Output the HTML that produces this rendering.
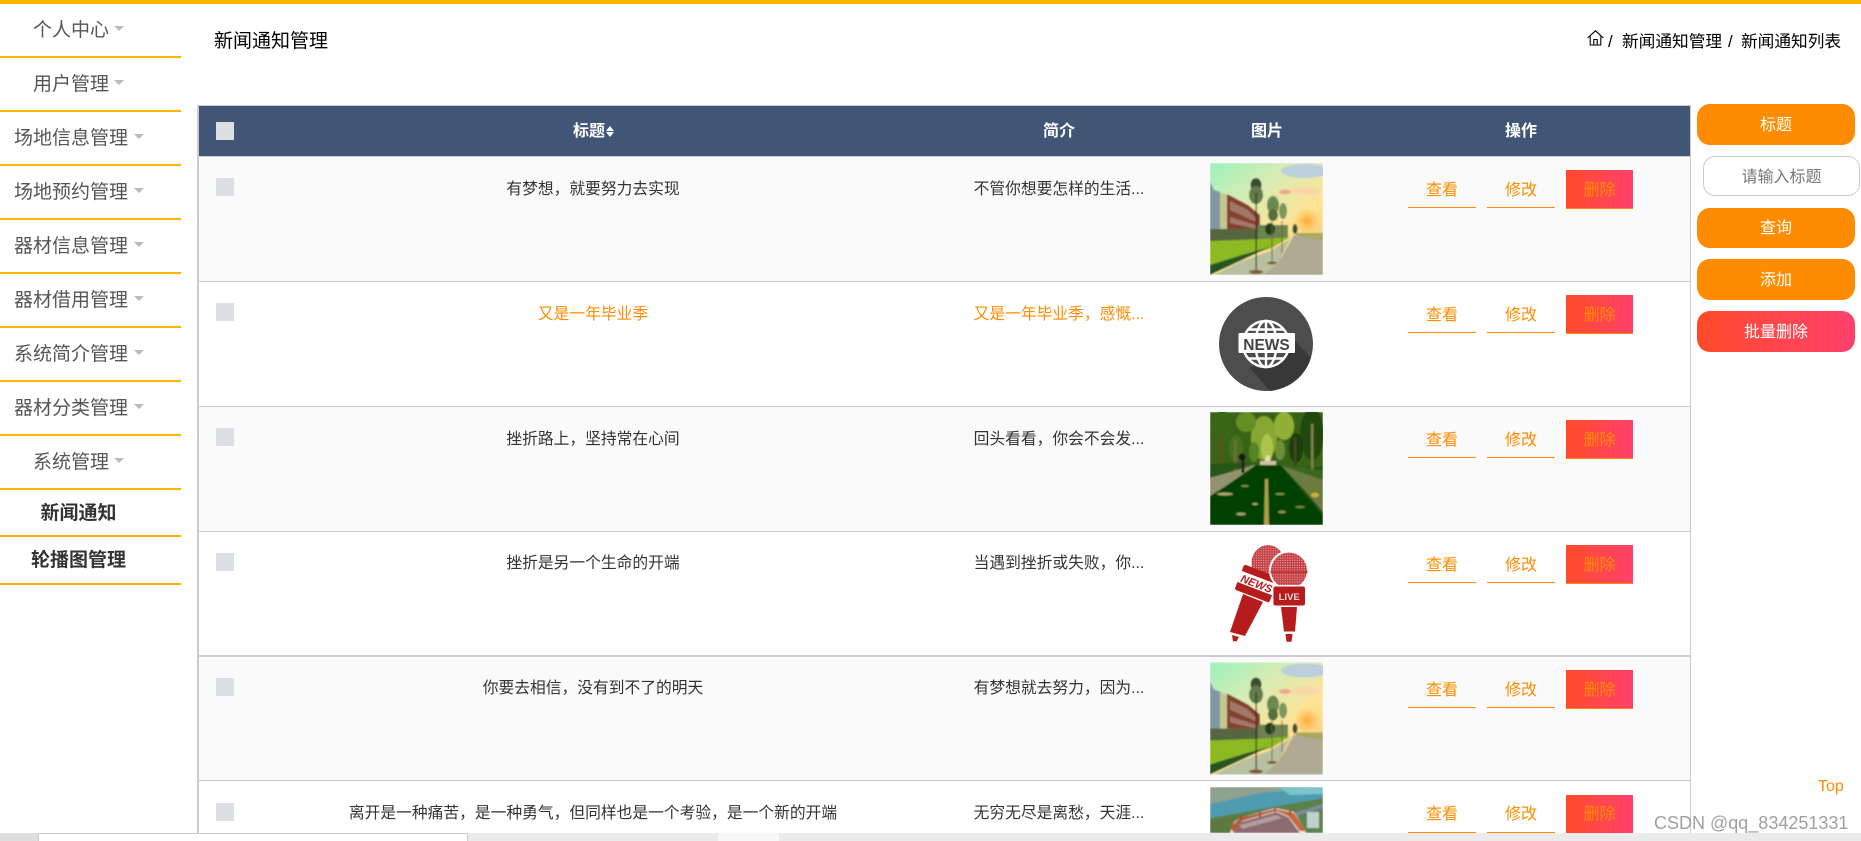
<!DOCTYPE html>
<html lang="zh-CN">
<head>
<meta charset="utf-8">
<title>新闻通知管理</title>
<style>
html,body{margin:0;padding:0;width:1861px;height:841px;overflow:hidden;background:#fff;}
body{position:relative;font-family:"Liberation Sans","Noto Sans CJK SC",sans-serif;font-size:16px;color:#333;}
.a{position:absolute;white-space:nowrap;}
.c{text-align:center;}
#top{left:0;top:0;width:1861px;height:4px;background:#ffb400;}
.m{left:0;width:181px;height:2px;background:#ffb400;}
.mt{font-size:19px;line-height:28px;height:28px;color:#555;}
.mb{font-size:19px;line-height:28px;height:28px;color:#333;font-weight:700;left:0;width:157px;text-align:center;}
.tri{width:0;height:0;border-left:5.5px solid transparent;border-right:5.5px solid transparent;border-top:5px solid #bbb;}
.row{left:199px;width:1491px;height:125px;}
.ln{left:199px;width:1491px;height:1px;background:#ccc;}
.cb{left:216px;width:18px;height:18px;background:#dcdfe4;}
.t{left:243px;width:700px;text-align:center;line-height:24px;height:24px;color:#333;font-size:15.75px;}
.i{left:909px;width:300px;text-align:center;line-height:24px;height:24px;color:#333;font-size:15.75px;}
.org{color:#ff8c00;}
.th{line-height:24px;height:24px;color:#fff;font-weight:700;text-align:center;}
.bt{width:68px;height:37px;border-bottom:1.5px solid #ff8c00;color:#ff8c00;text-align:center;line-height:41px;}
.del{left:1566px;width:67px;height:38px;border-bottom:1px solid #ff8c00;background:linear-gradient(90deg,#ff4b2b,#ff416c);color:#ff8c00;text-align:center;line-height:41px;}
.rb{left:1697px;width:158px;border-radius:13px;background:#ff8c00;color:#fff;text-align:center;}
svg{position:absolute;display:block;}
</style>
</head>
<body>
<svg width="0" height="0" style="left:0;top:0">
<defs>
<linearGradient id="sk" x1="0" y1="0" x2=".75" y2="1"><stop offset="0" stop-color="#9cf2bc"/><stop offset=".35" stop-color="#d8ecb4"/><stop offset=".7" stop-color="#ffe294"/><stop offset="1" stop-color="#f8c878"/></linearGradient>
<radialGradient id="sun"><stop offset="0" stop-color="#ffa838"/><stop offset="1" stop-color="#ffb040" stop-opacity="0"/></radialGradient>
<filter id="b1" x="-10%" y="-10%" width="120%" height="120%"><feGaussianBlur stdDeviation=".8"/></filter>
<pattern id="dot" width="2.4" height="2.4" patternUnits="userSpaceOnUse"><rect width="2.4" height="2.4" fill="#c23a3e"/><circle cx="1.2" cy="1.2" r=".7" fill="#e6a0a0"/></pattern>
<clipPath id="cc"><circle cx="1266" cy="344" r="47"/></clipPath>
<g id="sa">
 <g filter="url(#b1)">
 <rect width="113" height="112" fill="url(#sk)"/>
 <ellipse cx="95" cy="8" rx="24" ry="7" fill="#bccfdc"/>
 <ellipse cx="75" cy="29" rx="6" ry="2.500" fill="#f0a890"/>
 <ellipse cx="96" cy="28" rx="14" ry="4" fill="#f8d8a8"/>
 <circle cx="97" cy="58" r="13" fill="url(#sun)"/>
 <rect x="86" y="70" width="27" height="9" fill="#a8a860"/>
 <polygon points="0,19 4,27 10,29 10,80 0,80" fill="#7f96a4"/>
 <polygon points="10,29 17,32 17,80 10,80" fill="#c4c890"/>
 <polygon points="17,31 38,42 50,52 50,76 17,80" fill="#86402f"/>
 <polygon points="20,38 38,47 46,55 46,59 20,47" fill="#a07868"/>
 <polygon points="20,54 46,62 46,66 20,60" fill="#a07868"/>
 <rect x="0" y="66" width="56" height="12" fill="#566640"/>
 <rect x="48" y="62" width="30" height="14" fill="#6c8450"/>
 <polygon points="0,78 55,76 80,74 62,85 32,94 0,106" fill="#8cba24"/>
 <polygon points="0,102 32,92 60,84 32,97 0,112" fill="#265420"/>
 <polygon points="84,72 113,78 113,112 52,112 66,102 74,90" fill="#aeaa94"/>
 <polygon points="80,76 60,88 32,98 4,112 54,112 68,100" fill="#b8c0a0"/>
 <ellipse cx="46" cy="22" rx="5.500" ry="7" fill="#3e4e30"/>
 <ellipse cx="46" cy="32" rx="7" ry="9" fill="#647a4c"/>
 <ellipse cx="63" cy="42" rx="6" ry="9" fill="#6c8850"/>
 <ellipse cx="63" cy="52" rx="5" ry="6" fill="#546f3e"/>
 <ellipse cx="73" cy="48" rx="4" ry="8" fill="#7c965c"/>
 <ellipse cx="60" cy="66" rx="5" ry="6" fill="#243e1c"/>
 <ellipse cx="85" cy="66" rx="2.500" ry="5" fill="#3c5030"/>
 <rect x="45.500" y="30" width="1.200" height="78" fill="#2a2818"/>
 <rect x="61.500" y="58" width="1" height="42" fill="#6c5c38"/>
 <rect x="71.500" y="58" width="1" height="32" fill="#6c5c38"/>
 <ellipse cx="46" cy="109" rx="7" ry="2" fill="#7c5c30"/>
 <ellipse cx="62" cy="100" rx="5" ry="1.500" fill="#7c5c30"/>
 </g>
</g>
<g id="sb">
 <g filter="url(#b1)">
 <rect width="113" height="113" fill="#245010"/>
 <rect x="0" y="0" width="113" height="55" fill="#386418"/>
 <ellipse cx="54" cy="26" rx="13" ry="22" fill="#86a830"/>
 <ellipse cx="57" cy="36" rx="6" ry="14" fill="#acc450"/>
 <ellipse cx="58" cy="47" rx="2.500" ry="4" fill="#dde4a0"/>
 <ellipse cx="74" cy="14" rx="10" ry="14" fill="#90b038"/>
 <ellipse cx="36" cy="10" rx="10" ry="10" fill="#649020"/>
 <ellipse cx="12" cy="14" rx="10" ry="16" fill="#386812"/>
 <ellipse cx="102" cy="22" rx="12" ry="26" fill="#204a0e"/>
 <ellipse cx="86" cy="36" rx="7" ry="15" fill="#1a3e0e"/>
 <ellipse cx="26" cy="36" rx="7" ry="13" fill="#44721c"/>
 <ellipse cx="44" cy="40" rx="5" ry="10" fill="#548424"/>
 <ellipse cx="70" cy="38" rx="5" ry="10" fill="#6c9036"/>
 <rect x="9" y="22" width="3.500" height="44" fill="#54541f"/>
 <rect x="24" y="28" width="2.500" height="30" fill="#70703a"/>
 <rect x="84" y="25" width="2.500" height="30" fill="#44441c"/>
 <rect x="101" y="12" width="2.500" height="52" fill="#80804a"/>
 <polygon points="0,52 45,50 0,66" fill="#285618"/>
 <polygon points="0,66 44,53 46,55 0,84" fill="#92926e"/>
 <polygon points="72,53 113,58 113,68 100,68" fill="#386820"/>
 <polygon points="72,54 113,68 113,100 96,80" fill="#6c7c40"/>
 <polygon points="46,53 70,53 113,104 113,113 0,113 0,85" fill="#054006"/>
 <rect x="50" y="49" width="16" height="4" fill="#d0c0a8"/>
 <polygon points="55,67 58,67 59,113 54,113" fill="#aca048"/>
 <ellipse cx="31" cy="102" rx="5" ry="1.500" fill="#a8a068"/>
 <ellipse cx="45" cy="92" rx="3" ry="1.200" fill="#a8a068"/>
 <ellipse cx="15" cy="82" rx="8" ry="1.500" fill="#b0a870"/>
 <ellipse cx="70" cy="82" rx="5" ry="1.200" fill="#789038"/>
 <ellipse cx="72" cy="100" rx="4" ry="1.500" fill="#88984a"/>
 <ellipse cx="90" cy="95" rx="5" ry="1.200" fill="#748838"/>
 <ellipse cx="35" cy="74" rx="4" ry="1.200" fill="#789038"/>
 <ellipse cx="105" cy="83" rx="4" ry="2.500" fill="#c8b040"/>
 <rect x="31.500" y="48" width="3" height="13" fill="#20201c"/>
 <ellipse cx="32" cy="45" rx="3.500" ry="3.500" fill="#18181a"/>
 </g>
</g>
<g id="sc">
 <g filter="url(#b1)">
 <rect width="113" height="46" fill="#8fa292"/>
 <polygon points="0,17 50,6 113,0 113,12 0,32" fill="#4f9cb0"/>
 <polygon points="70,1 113,0 113,7 80,8" fill="#7cc4cc"/>
 <polygon points="0,31 113,11 113,20 0,46" fill="#5c8048"/>
 <polygon points="20,46 113,17 113,26 60,40" fill="#808aa0"/>
 <polygon points="0,34 40,26 26,46 0,46" fill="#5c7840"/>
 <polygon points="88,28 113,21 113,46 92,46" fill="#5c8450"/>
 <rect x="97" y="25" width="12" height="16" fill="#c0d0cc"/>
 <polygon points="20,46 24,35 30,31 65,21 84,25 92,38 96,46" fill="#e8e0d8"/>
 <polygon points="20,40 30,31 65,22 66,24 32,34 24,46" fill="#b85a38"/>
 <polygon points="65,22 84,26 96,44 90,44 78,29 66,24" fill="#c8683c"/>
 <polygon points="24,46 31,35 66,25 78,30 90,46" fill="#8c6c70"/>
 <polygon points="30,38 66,28 72,31 32,42" fill="#b49ca0"/>
 <rect x="30" y="28" width="2" height="6" fill="#a84828"/>
 <rect x="49" y="25" width="2" height="6" fill="#a84828"/>
 <rect x="64" y="19" width="2" height="6" fill="#b04828"/>
 <rect x="79" y="22" width="2" height="6" fill="#b04828"/>
 </g>
</g>
</defs>
</svg>

<div class="a" id="top"></div>

<!-- sidebar -->
<div class="a mt" style="left:33px;top:17px;">个人中心</div><div class="a tri" style="left:114px;top:26px;"></div>
<div class="a m" style="top:56px;"></div>
<div class="a mt" style="left:33px;top:71px;">用户管理</div><div class="a tri" style="left:114px;top:80px;"></div>
<div class="a m" style="top:110px;"></div>
<div class="a mt" style="left:14px;top:125px;">场地信息管理</div><div class="a tri" style="left:134px;top:134px;"></div>
<div class="a m" style="top:164px;"></div>
<div class="a mt" style="left:14px;top:179px;">场地预约管理</div><div class="a tri" style="left:134px;top:188px;"></div>
<div class="a m" style="top:218px;"></div>
<div class="a mt" style="left:14px;top:233px;">器材信息管理</div><div class="a tri" style="left:134px;top:242px;"></div>
<div class="a m" style="top:272px;"></div>
<div class="a mt" style="left:14px;top:287px;">器材借用管理</div><div class="a tri" style="left:134px;top:296px;"></div>
<div class="a m" style="top:326px;"></div>
<div class="a mt" style="left:14px;top:341px;">系统简介管理</div><div class="a tri" style="left:134px;top:350px;"></div>
<div class="a m" style="top:380px;"></div>
<div class="a mt" style="left:14px;top:395px;">器材分类管理</div><div class="a tri" style="left:134px;top:404px;"></div>
<div class="a m" style="top:434px;"></div>
<div class="a mt" style="left:33px;top:449px;">系统管理</div><div class="a tri" style="left:114px;top:458px;"></div>
<div class="a m" style="top:488px;"></div>
<div class="a mb" style="top:500px;">新闻通知</div>
<div class="a m" style="top:535px;"></div>
<div class="a mb" style="top:547px;">轮播图管理</div>
<div class="a m" style="top:583px;"></div>

<!-- heading -->
<div class="a" style="left:214px;top:28px;font-size:19px;line-height:28px;color:#000;">新闻通知管理</div>
<svg style="left:1587px;top:30px;" width="17" height="16" viewBox="0 0 17 16"><path d="M.6 8 8.500 .8 16.400 8M3.200 6.500V15H13.800V6.500M6.800 15V9.500H10.200V15" fill="none" stroke="#000" stroke-width="1.100"/></svg>
<div class="a" style="left:1608px;top:30px;font-size:16.700px;line-height:24px;color:#000;">/</div>
<div class="a" style="left:1622px;top:30px;font-size:16.700px;line-height:24px;color:#000;">新闻通知管理</div>
<div class="a" style="left:1728px;top:30px;font-size:16.700px;line-height:24px;color:#000;">/</div>
<div class="a" style="left:1741px;top:30px;font-size:16.700px;line-height:24px;color:#000;">新闻通知列表</div>

<!-- table frame -->
<div class="a" style="left:197px;top:105px;width:2px;height:728px;background:#ccc;"></div>
<div class="a" style="left:1690px;top:105px;width:1px;height:728px;background:#ccc;"></div>
<div class="a" style="left:197px;top:105px;width:1494px;height:1px;background:#ccc;"></div>
<div class="a" style="left:199px;top:106px;width:1491px;height:50px;background:#415676;"></div>
<div class="a" style="left:199px;top:156px;width:1491px;height:1px;background:#ccc;"></div>

<div class="a row" style="top:157px;background:#fafafa;"></div>
<div class="a row" style="top:407px;background:#fafafa;"></div>
<div class="a row" style="top:657px;background:#fafafa;"></div>
<div class="a ln" style="top:281px;"></div>
<div class="a ln" style="top:406px;"></div>
<div class="a ln" style="top:531px;"></div>
<div class="a ln" style="top:655px;height:2px;"></div>
<div class="a ln" style="top:780px;"></div>

<!-- header -->
<div class="a cb" style="top:122px;"></div>
<div class="a th" style="left:573px;top:120px;width:32px;">标题</div>
<div class="a" style="left:606px;top:126px;width:0;height:0;border-left:4.500px solid transparent;border-right:4.500px solid transparent;border-bottom:5px solid #fff;"></div>
<div class="a" style="left:606px;top:132px;width:0;height:0;border-left:4.500px solid transparent;border-right:4.500px solid transparent;border-top:5px solid #fff;"></div>
<div class="a th" style="left:1019px;top:120px;width:80px;">简介</div>
<div class="a th" style="left:1227px;top:120px;width:80px;">图片</div>
<div class="a th" style="left:1481px;top:120px;width:80px;">操作</div>

<!-- row 1 -->
<div class="a cb" style="top:178px;"></div>
<div class="a t" style="top:178px;">有梦想，就要努力去实现</div>
<div class="a i" style="top:178px;">不管你想要怎样的生活...</div>
<svg style="left:1210px;top:163px;" width="113" height="112" viewBox="0 0 113 112"><use href="#sa"/></svg>
<div class="a bt" style="left:1408px;top:170px;">查看</div>
<div class="a bt" style="left:1487px;top:170px;">修改</div>
<div class="a del" style="top:170px;">删除</div>

<!-- row 2 -->
<div class="a cb" style="top:303px;"></div>
<div class="a t org" style="top:303px;">又是一年毕业季</div>
<div class="a i org" style="top:303px;">又是一年毕业季，感慨...</div>
<svg style="left:0;top:0;" width="1861" height="841" viewBox="0 0 1861 841">
 <circle cx="1266" cy="344" r="47" fill="#4d4d4d"/>
 <g clip-path="url(#cc)"><polygon points="1294,340 1335,382 1295,420 1250,368" fill="#383838"/></g>
 <g fill="none" stroke="#fff" stroke-width="2.400">
  <circle cx="1266" cy="344" r="23" fill="#4d4d4d"/>
  <ellipse cx="1266" cy="344" rx="10.500" ry="23"/>
  <path d="M1266 321V367M1248 329.500H1284M1248 358.500H1284"/>
 </g>
 <rect x="1238.500" y="333" width="56.500" height="20" rx="1" fill="#fff"/>
 <text x="1266.500" y="350" text-anchor="middle" font-family="'Liberation Sans',sans-serif" font-weight="700" font-size="15.500" fill="#444">NEWS</text>
</svg>
<div class="a bt" style="left:1408px;top:295px;">查看</div>
<div class="a bt" style="left:1487px;top:295px;">修改</div>
<div class="a del" style="top:295px;">删除</div>

<!-- row 3 -->
<div class="a cb" style="top:428px;"></div>
<div class="a t" style="top:428px;">挫折路上，坚持常在心间</div>
<div class="a i" style="top:428px;">回头看看，你会不会发...</div>
<svg style="left:1210px;top:412px;" width="113" height="113" viewBox="0 0 113 113"><use href="#sb"/></svg>
<div class="a bt" style="left:1408px;top:420px;">查看</div>
<div class="a bt" style="left:1487px;top:420px;">修改</div>
<div class="a del" style="top:420px;">删除</div>

<!-- row 4 -->
<div class="a cb" style="top:553px;"></div>
<div class="a t" style="top:552px;">挫折是另一个生命的开端</div>
<div class="a i" style="top:552px;">当遇到挫折或失败，你...</div>
<svg style="left:0;top:0;" width="1861" height="841" viewBox="0 0 1861 841">
 <ellipse cx="1268" cy="563" rx="16.500" ry="18" fill="url(#dot)"/>
 <polygon points="1243,594 1263,602 1245,636 1230,632" fill="#b71c1c"/>
 <polygon points="1232,635 1239,637 1236.500,641.500 1233,641" fill="#b71c1c"/>
 <g transform="rotate(21 1256.500 584)">
  <rect x="1238" y="570" width="37" height="27" rx="2" fill="#b71c1c"/>
  <rect x="1238" y="577" width="37" height="12" fill="#fff"/>
  <text x="1256.500" y="587.500" text-anchor="middle" font-family="'Liberation Sans',sans-serif" font-weight="700" font-style="italic" font-size="11" fill="#b71c1c">NEWS</text>
 </g>
 <circle cx="1289" cy="570.500" r="20" fill="#fff"/>
 <circle cx="1289" cy="570.500" r="18" fill="url(#dot)"/>
 <rect x="1270.500" y="570.500" width="37" height="2.500" fill="#c23a3e"/>
 <rect x="1272" y="585" width="35" height="22" rx="3" fill="#fff"/>
 <rect x="1273.400" y="586.500" width="31.600" height="19" rx="2" fill="#b71c1c"/>
 <text x="1289.200" y="599.800" text-anchor="middle" font-family="'Liberation Sans',sans-serif" font-weight="700" font-size="9.500" fill="#f0d8d8">LIVE</text>
 <polygon points="1281,607 1297,607 1295,631.500 1284,631.500" fill="#b71c1c"/>
 <polygon points="1285.500,634 1292.500,634 1291.500,641.700 1286.500,641.700" fill="#b71c1c"/>
</svg>
<div class="a bt" style="left:1408px;top:545px;">查看</div>
<div class="a bt" style="left:1487px;top:545px;">修改</div>
<div class="a del" style="top:545px;">删除</div>

<!-- row 5 -->
<div class="a cb" style="top:678px;"></div>
<div class="a t" style="top:677px;">你要去相信，没有到不了的明天</div>
<div class="a i" style="top:677px;">有梦想就去努力，因为...</div>
<svg style="left:1210px;top:662px;" width="113" height="113" viewBox="0 0 113 112"><use href="#sa"/></svg>
<div class="a bt" style="left:1408px;top:670px;">查看</div>
<div class="a bt" style="left:1487px;top:670px;">修改</div>
<div class="a del" style="top:670px;">删除</div>

<!-- row 6 -->
<div class="a cb" style="top:803px;"></div>
<div class="a t" style="top:802px;">离开是一种痛苦，是一种勇气，但同样也是一个考验，是一个新的开端</div>
<div class="a i" style="top:802px;">无穷无尽是离愁，天涯...</div>
<svg style="left:1210px;top:787px;" width="113" height="46" viewBox="0 0 113 46"><use href="#sc"/></svg>
<div class="a bt" style="left:1408px;top:795px;line-height:39px;">查看</div>
<div class="a bt" style="left:1487px;top:795px;line-height:39px;">修改</div>
<div class="a del" style="top:795px;line-height:39px;">删除</div>

<!-- right search -->
<div class="a rb" style="top:104px;height:41px;line-height:43px;">标题</div>
<div class="a" style="left:1703px;top:156px;width:155px;height:38px;border:1.500px solid #ccc;border-radius:12px;background:#fff;color:#777;text-align:center;line-height:42px;">请输入标题</div>
<div class="a rb" style="top:208px;height:40px;line-height:42px;">查询</div>
<div class="a rb" style="top:259px;height:41px;line-height:43px;">添加</div>
<div class="a rb" style="top:311px;height:41px;line-height:43px;background:linear-gradient(90deg,#ff4b2b,#ff416c);">批量删除</div>

<div class="a" style="left:1818px;top:775px;line-height:24px;color:#ff8c00;font-size:16px;">Top</div>

<!-- bottom bar -->
<div class="a" style="left:0;top:833px;width:1861px;height:8px;background:#ebebeb;"></div>
<div class="a" style="left:0;top:833px;width:38px;height:8px;background:#dedede;"></div>
<div class="a" style="left:38px;top:833px;width:430px;height:8px;background:#fff;box-sizing:border-box;border:1px solid #ccc;border-bottom:0;"></div>
<div class="a" style="left:718px;top:833px;width:61px;height:8px;background:#f8f8f8;"></div>

<div class="a" style="left:1654px;top:810px;font-size:18px;line-height:26px;color:#a0a0a0;">CSDN @qq_834251331</div>
</body>
</html>
